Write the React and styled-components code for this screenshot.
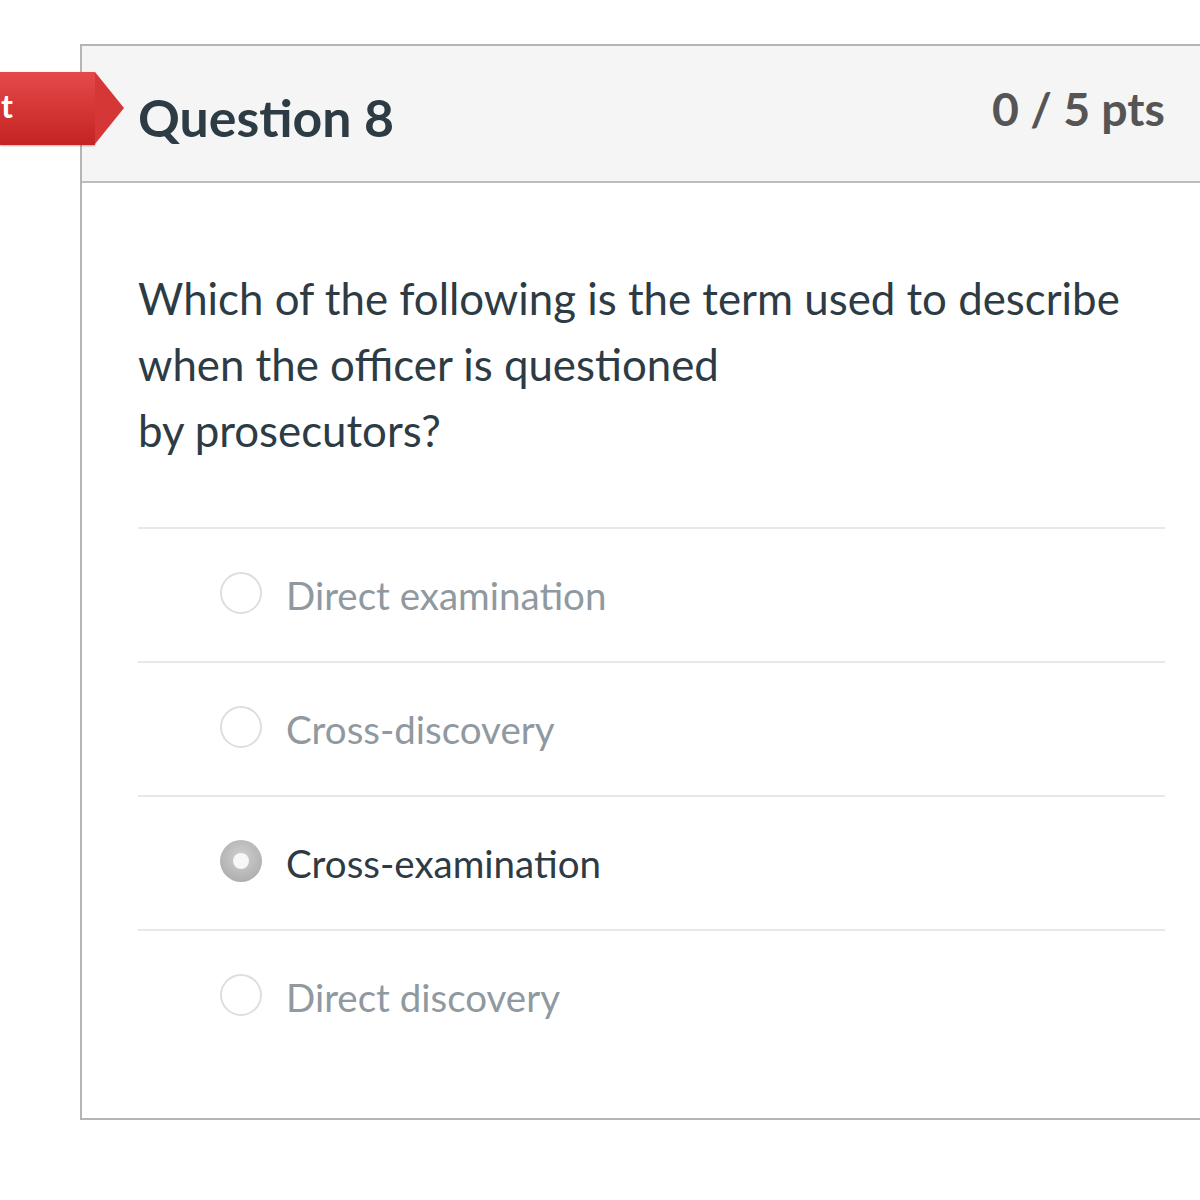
import React from 'react';
import styled, { createGlobalStyle } from 'styled-components';

const Global = createGlobalStyle`
  html, body {
    margin: 0;
    padding: 0;
    background: #fff;
    overflow: hidden;
    font-family: Lato, "Open Sans", "Liberation Sans", sans-serif;
  }
`;

const answers = [
  { id: 1, text: 'Direct examination', picked: false },
  { id: 2, text: 'Cross-discovery', picked: false },
  { id: 3, text: 'Cross-examination', picked: true },
  { id: 4, text: 'Direct discovery', picked: false },
];

const Page = styled.div`
  position: relative;
  width: 1200px;
  height: 1200px;
  padding: 44px 0 0 80px;
  box-sizing: border-box;
`;

const Tag = styled.div`
  position: absolute;
  left: 0;
  top: 72px;
  width: 95px;
  height: 73px;
  background: linear-gradient(#e54a4a, #c42323);
  color: #fff;
  font-size: 32px;
  font-weight: 700;
  display: flex;
  align-items: center;
  box-sizing: border-box;
  padding: 0 0 6px 1px;
  box-shadow: 0 1px 2px rgba(0, 0, 0, 0.3);

  &::after {
    content: '';
    position: absolute;
    left: 95px;
    top: 0;
    border-top: 36.5px solid transparent;
    border-bottom: 36.5px solid transparent;
    border-left: 29px solid #d53636;
  }
`;

const Card = styled.div`
  width: 1122px;
  border: 2px solid #b5b5b5;
  box-sizing: border-box;
  background: #fff;
`;

const Header = styled.div`
  height: 137px;
  background: #f5f5f5;
  border-bottom: 2px solid #bdbdbd;
  display: flex;
  align-items: center;
  justify-content: space-between;
  padding: 0 35px 0 56px;
  box-sizing: border-box;
`;

const Title = styled.h2`
  margin: 6px 0 0;
  font-size: 51.8px;
  font-weight: 700;
  color: #2d3b45;
`;

const Points = styled.div`
  margin-top: -12px;
  font-size: 46.4px;
  font-weight: 700;
  color: #555;
`;

const Body = styled.div`
  padding: 82px 35px 55px 56px;
`;

const Prompt = styled.p`
  margin: 0 0 64px;
  font-size: 43.8px;
  line-height: 66px;
  color: #2d3b45;
`;

const Row = styled.div`
  height: 134px;
  border-top: 2px solid #e8e8e8;
  display: flex;
  align-items: center;
  padding-left: 82px;
  box-sizing: border-box;
`;

const Radio = styled.span`
  width: 42px;
  height: 42px;
  border-radius: 50%;
  box-sizing: border-box;
  flex: none;
  display: flex;
  align-items: center;
  justify-content: center;
  border: ${(p) => (p.$on ? 'none' : '2px solid #dedede')};
  background: ${(p) =>
    p.$on ? 'radial-gradient(circle at 50% 40%, #cfcfcf, #a5a5a5)' : '#fff'};
  margin-top: -4px;

  &::after {
    content: '';
    display: ${(p) => (p.$on ? 'block' : 'none')};
    width: 16px;
    height: 16px;
    border-radius: 50%;
    background: #f7f7f7;
  }
`;

const Label = styled.span`
  margin-left: 24px;
  font-size: 38.5px;
  color: ${(p) => (p.$on ? '#2d3b45' : '#8f999f')};
`;

export default function App() {
  return (
    <Page>
      <Global />
      <Tag>t</Tag>
      <Card>
        <Header>
          <Title>Question 8</Title>
          <Points>0 / 5 pts</Points>
        </Header>
        <Body>
          <Prompt>
            Which of the following is the term used to describe
            <br />
            when the officer is questioned
            <br />
            by prosecutors?
          </Prompt>
          {answers.map((a) => (
            <Row key={a.id}>
              <Radio $on={a.picked} />
              <Label $on={a.picked}>{a.text}</Label>
            </Row>
          ))}
        </Body>
      </Card>
    </Page>
  );
}
